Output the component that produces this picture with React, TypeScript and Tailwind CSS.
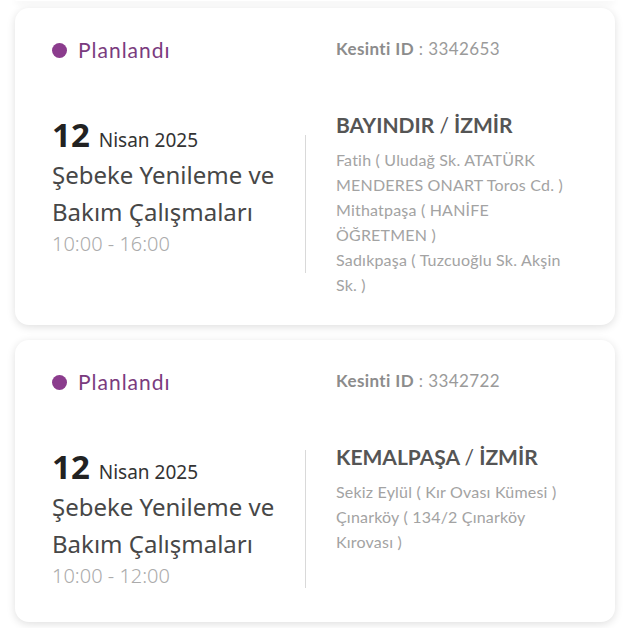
import * as React from 'react';

type Outage = {
  id: string;
  day: string;
  month: string;
  title: string;
  time: string;
  district: string;
  city: string;
  places: string[];
};

const outages: Outage[] = [
  {
    id: '3342653',
    day: '12',
    month: 'Nisan 2025',
    title: 'Şebeke Yenileme ve Bakım Çalışmaları',
    time: '10:00 - 16:00',
    district: 'BAYINDIR',
    city: 'İZMİR',
    places: [
      'Fatih ( Uludağ Sk. ATATÜRK MENDERES ONART Toros Cd. )',
      'Mithatpaşa ( HANİFE ÖĞRETMEN )',
      'Sadıkpaşa ( Tuzcuoğlu Sk. Akşin Sk. )',
    ],
  },
  {
    id: '3342722',
    day: '12',
    month: 'Nisan 2025',
    title: 'Şebeke Yenileme ve Bakım Çalışmaları',
    time: '10:00 - 12:00',
    district: 'KEMALPAŞA',
    city: 'İZMİR',
    places: ['Sekiz Eylül ( Kır Ovası Kümesi )', 'Çınarköy ( 134/2 Çınarköy Kırovası )'],
  },
];

const geo = "font-['Lato','Liberation_Sans',sans-serif]";
const hum = "font-['Noto_Sans','Open_Sans',sans-serif]";

function OutageCard({ o }: { o: Outage }) {
  return (
    <div className="bg-white rounded-[14px] shadow-[0_2px_9px_rgba(0,0,0,0.13)] pl-[37px] pr-[36px] pt-[28px] pb-[28px]">
      {/* status row */}
      <div className="flex items-center">
        <div className="w-[284px] flex items-center gap-[11px]">
          <span className="w-[15px] h-[15px] rounded-full bg-[#8b3c8d]" />
          <span className={`${geo} text-[21px] tracking-[1px] leading-[28px] text-[#7a3b7e]`}>Planlandı</span>
        </div>
        <div className={`${geo} text-[17px] tracking-[0.4px] leading-[24px] text-[#9a9a9a] -mt-[2px]`}>
          <span className="font-bold text-[#8c8c8c]">Kesinti ID</span> : {o.id}
        </div>
      </div>

      {/* body */}
      <div className="flex mt-[47px]">
        <div className={`${hum} w-[240px] self-start mt-[6px] mb-[4px]`}>
          <div className="flex items-baseline gap-[9px] leading-[36px]">
            <span className="text-[33px] font-bold text-[#222]">{o.day}</span>
            <span className="text-[19px] text-[#333]">{o.month}</span>
          </div>
          <div className="text-[24px] leading-[37px] text-[#474747] mt-[-2px]">{o.title}</div>
          <div className="text-[20px] leading-[28px] text-[#ababab] font-light">{o.time}</div>
        </div>
        <div className="w-px h-[138px] bg-[#d9d9d9] self-center ml-[13px] mr-[15px] shrink-0" />
        <div className={`${geo} flex-1 pl-[15px] self-start`}>
          <div className="text-[21px] leading-[28px] text-[#555] font-bold">
            {o.district} <span className="font-normal">/</span> {o.city}
          </div>
          <div className="mt-[8px] text-[16px] tracking-[0.2px] leading-[25px] text-[#a3a3a3] pr-[2px]">
            {o.places.map((p) => (
              <div key={p}>{p}</div>
            ))}
          </div>
        </div>
      </div>
    </div>
  );
}

export default function App() {
  return (
    <div className="bg-white w-[630px] h-[628px] overflow-hidden px-[15px]">
      {/* end of previous card */}
      <div className="h-[2px] -mt-px bg-white rounded-b-[14px] shadow-[0_2px_6px_rgba(0,0,0,0.10)]" />
      <div className="flex flex-col gap-[15px] mt-[7px]">
        {outages.map((o) => (
          <OutageCard key={o.id} o={o} />
        ))}
      </div>
    </div>
  );
}
